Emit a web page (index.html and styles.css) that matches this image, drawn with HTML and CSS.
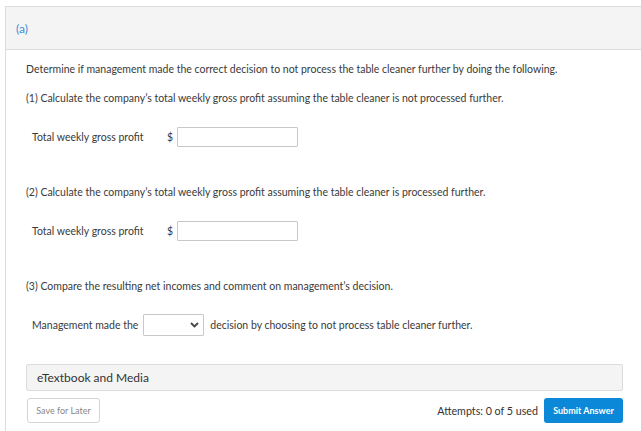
FILE: index.html
```html
<!DOCTYPE html>
<html>
<head>
<meta charset="utf-8">
<link rel="stylesheet" href="styles.css">
</head>
<body>
<div class="page">
  <div class="panel">
    <div class="panel-head"><span class="part">(a)</span></div>
    <div class="panel-body">
      <p class="intro">Determine if management made the correct decision to not process the table cleaner further by doing the following.</p>
      <p class="step first">(1) Calculate the company’s total weekly gross profit assuming the table cleaner is not processed further.</p>
      <div class="field-row">
        <span class="label">Total weekly gross profit</span>
        <span class="cur">$</span>
        <span class="input"></span>
      </div>
      <p class="step">(2) Calculate the company’s total weekly gross profit assuming the table cleaner is processed further.</p>
      <div class="field-row">
        <span class="label">Total weekly gross profit</span>
        <span class="cur">$</span>
        <span class="input"></span>
      </div>
      <p class="step">(3) Compare the resulting net incomes and comment on management’s decision.</p>
      <div class="select-row">
        <span class="label-inline">Management made the</span>
        <span class="select">
          <svg class="chev" width="9" height="6" viewBox="0 0 9 6"><path d="M1 1 L4.5 4.5 L8 1" fill="none" stroke="#444" stroke-width="1.8"/></svg>
        </span>
        <span class="after">decision by choosing to not process table cleaner further.</span>
      </div>
      <div class="media-bar">eTextbook and Media</div>
      <div class="actions">
        <span class="save">Save for Later</span>
        <span class="attempts">Attempts: 0 of 5 used</span>
        <span class="submit">Submit Answer</span>
      </div>
    </div>
  </div>
</div>
</body>
</html>
```
FILE: styles.css
```css
html, body {
  margin: 0;
  padding: 0;
  overflow: hidden;
  background: #fff;
}
body {
  font-family: Lato, "Open Sans", sans-serif;
  color: #3a3a3a;
}
.page {
  padding: 6px 0 0 5px;
  height: 425px;
}
.panel {
  border-left: 1px solid #dcdcdc;
  border-top: 1px solid #dcdcdc;
  height: 424px;
}
.panel-head {
  height: 42px;
  background: #f4f4f4;
  border-bottom: 1px solid #dcdcdc;
  display: flex;
  align-items: center;
  padding-left: 10px;
}
.part {
  font-size: 12px;
  color: #3a8ddf;
}
.panel-body {
  width: 597px;
  padding-left: 20px;
  padding-top: 12px;
}
p {
  margin: 0;
  font-size: 10.5px;
  line-height: 14px;
}
.step {
  margin-top: 38px;
}
.step.first {
  margin-top: 15px;
}
.field-row {
  margin-top: 22px;
  display: flex;
  align-items: center;
  padding-left: 6px;
  font-size: 10.5px;
  height: 20px;
}
.label {
  width: 135px;
}
.cur {
  width: 10px;
}
.input {
  width: 119px;
  height: 18px;
  border: 1px solid #c8c8c8;
  border-radius: 1px;
  background: #fff;
}
.select-row {
  margin-top: 21px;
  display: flex;
  align-items: center;
  padding-left: 6px;
  font-size: 10.5px;
  height: 22px;
}
.label-inline {
  margin-right: 5px;
}
.select {
  width: 59px;
  height: 20px;
  border: 1px solid #c8c8c8;
  border-radius: 1px;
  display: flex;
  align-items: center;
  justify-content: flex-end;
}
.chev {
  margin-right: 4px;
}
.after {
  margin-left: 6px;
}
.media-bar {
  margin-top: 28px;
  height: 25px;
  background: #f4f4f4;
  border: 1px solid #dcdcdc;
  border-radius: 2px;
  display: flex;
  align-items: center;
  padding-left: 10px;
  font-size: 12px;
  color: #333;
}
.actions {
  margin-top: 7px;
  display: flex;
  align-items: center;
  height: 25px;
}
.save {
  width: 71px;
  height: 23px;
  margin-left: 1px;
  border: 1px solid #d4d4d4;
  border-radius: 3px;
  display: flex;
  align-items: center;
  justify-content: center;
  font-size: 9px;
  color: #888;
}
.attempts {
  margin-left: auto;
  margin-right: 6px;
  font-size: 10.7px;
  color: #333;
}
.submit {
  width: 79px;
  height: 25px;
  background: #0b88d8;
  border-radius: 3px;
  color: #fff;
  font-weight: bold;
  font-size: 9px;
  display: flex;
  align-items: center;
  justify-content: center;
}
```
